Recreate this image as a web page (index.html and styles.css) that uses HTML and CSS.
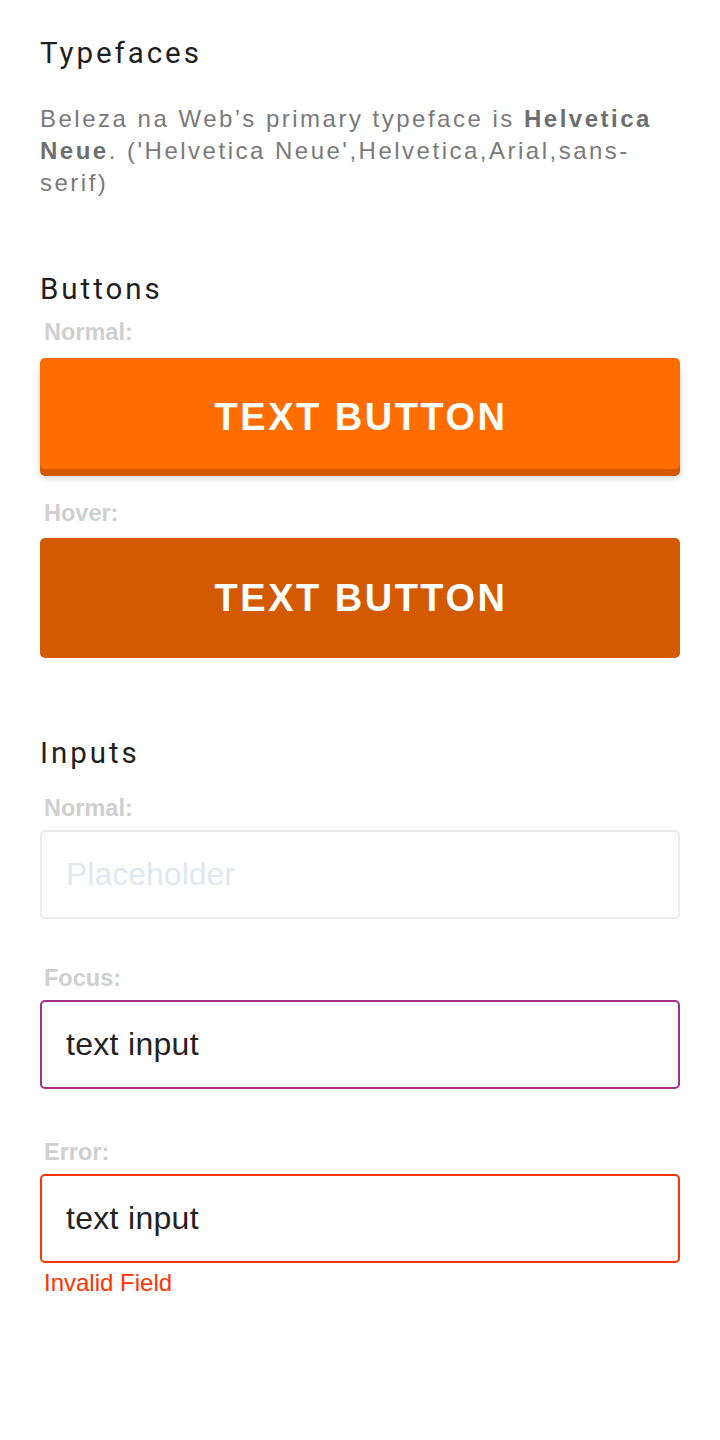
FILE: index.html
```html
<!DOCTYPE html>
<html lang="en">
<head>
<meta charset="utf-8">
<title>Style guide</title>
<link rel="stylesheet" href="styles.css">
</head>
<body>
<main class="page">
  <section class="section section-type">
    <h2 class="heading">Typefaces</h2>
    <p class="lead">Beleza na Web’s primary typeface is <strong>Helvetica Neue</strong>. ('Helvetica Neue',Helvetica,Arial,sans-serif)</p>
  </section>

  <section class="section section-buttons">
    <h2 class="heading">Buttons</h2>
    <div class="label label-first">Normal:</div>
    <div class="btn btn-normal">TEXT BUTTON</div>
    <div class="label label-hover">Hover:</div>
    <div class="btn btn-hover">TEXT BUTTON</div>
  </section>

  <section class="section section-inputs">
    <h2 class="heading">Inputs</h2>
    <div class="label label-input-first">Normal:</div>
    <div class="field field-normal"><span class="placeholder">Placeholder</span></div>
    <div class="label label-input">Focus:</div>
    <div class="field field-focus"><span class="value">text input</span></div>
    <div class="label label-input label-error">Error:</div>
    <div class="field field-error"><span class="value">text input</span></div>
    <div class="error-msg">Invalid Field</div>
  </section>
</main>
</body>
</html>
```

FILE: styles.css
```css
* { box-sizing: border-box; }

html, body {
  margin: 0;
  padding: 0;
  background: #ffffff;
}

body {
  font-family: Roboto, "Liberation Sans", Arial, sans-serif;
  color: #222222;
}

.page {
  width: 720px;
  padding: 33px 40px 0 40px;
}

.section { display: flex; flex-direction: column; }

.heading {
  margin: 0;
  font-size: 29.5px;
  line-height: 40px;
  font-weight: 400;
  letter-spacing: 0.1em;
  color: #1f1f1f;
}

.lead {
  margin: 30px 0 0 0;
  font-family: "Liberation Sans", Arial, sans-serif;
  font-size: 24px;
  line-height: 32px;
  letter-spacing: 2.5px;
  color: #7a7a7a;
}
.lead strong { font-weight: 700; color: #6e6e6e; }

.section-buttons { margin-top: 70px; }

.label {
  font-family: "Liberation Sans", Arial, sans-serif;
  font-weight: 700;
  font-size: 23.5px;
  line-height: 24px;
  color: #cfcfcf;
  padding-left: 4px;
}
.label-first { margin-top: 11px; }
.label-hover { margin-top: 32px; }

.btn {
  display: flex;
  align-items: center;
  justify-content: center;
  border-radius: 5px;
  color: #ffffff;
  font-family: "Liberation Sans", Arial, sans-serif;
  font-weight: 700;
  font-size: 38px;
  letter-spacing: 2.5px;
  padding-left: 2px;
}
.btn-normal {
  margin-top: 14px;
  height: 111px;
  padding-top: 8px;
  background: #ff6c00;
  box-shadow: 0 7px 0 #d35a00, 0 9px 6px rgba(0, 0, 0, 0.18);
}
.btn-hover {
  margin-top: 13px;
  height: 120px;
  background: #d35a00;
}

.section-inputs { margin-top: 75px; }

.label-input-first { margin-top: 23px; }
.label-input { margin-top: 47px; }
.label-error { margin-top: 51px; }

.field {
  margin-top: 10px;
  height: 89px;
  border: 2px solid #ebebeb;
  border-radius: 5px;
  display: flex;
  align-items: center;
  padding-left: 24px;
  font-family: "Liberation Sans", Arial, sans-serif;
  font-size: 32px;
}
.placeholder { color: #e1e7ef; }
.value { color: #222222; letter-spacing: 0.3px; }
.field-focus { border-color: #a5308a; }
.field-error { border-color: #ff3300; }

.error-msg {
  margin-top: 6px;
  padding-left: 4px;
  font-family: "Liberation Sans", Arial, sans-serif;
  font-size: 24px;
  line-height: 28px;
  color: #ff3300;
}
```
